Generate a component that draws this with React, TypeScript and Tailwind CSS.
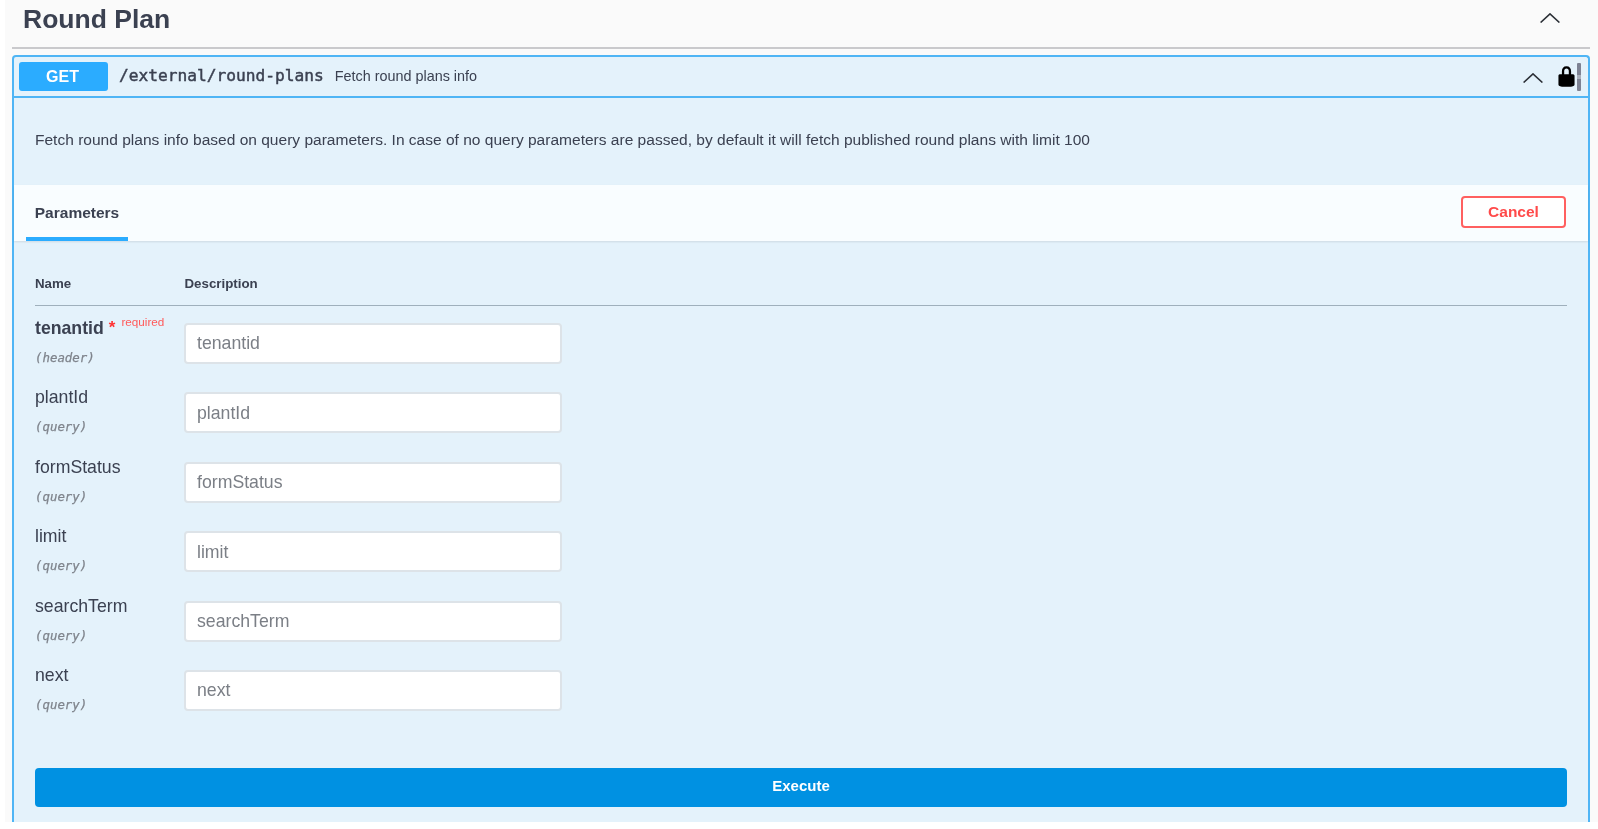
const sans = "font-['Liberation_Sans',Arial,sans-serif]";
const mono = "font-['DejaVu_Sans_Mono',monospace]";

const params = [
  { name: "tenantid", location: "(header)", required: true },
  { name: "plantId", location: "(query)" },
  { name: "formStatus", location: "(query)" },
  { name: "limit", location: "(query)" },
  { name: "searchTerm", location: "(query)" },
  { name: "next", location: "(query)" },
];

function Chevron({ className }: { className: string }) {
  return (
    <svg className={className} viewBox="0 0 20 10" fill="none" stroke="#2b2f36" strokeWidth="1.6">
      <polyline points="0.6,9.5 10,0.9 19.4,9.5" />
    </svg>
  );
}

function Lock() {
  return (
    <svg className="w-[23px] h-[23px] shrink-0" viewBox="0 0 20 20" fill="#000">
      <path d="M15.8 8H14V5.6C14 2.703 12.665 1 10 1 7.334 1 6 2.703 6 5.6V8H4c-.553 0-1 .646-1 1.199V17c0 .549.428 1.139.951 1.307l1.197.387C5.672 18.861 6.55 19 7.1 19h5.8c.549 0 1.428-.139 1.951-.307l1.196-.387c.524-.167.953-.757.953-1.306V9.199C17 8.646 16.352 8 15.8 8zM12 8H8V5.199C8 3.754 8.797 3 10 3c1.203 0 2 .754 2 2.199V8z" />
    </svg>
  );
}

function ParamRow({ name, location, required }: { name: string; location: string; required?: boolean }) {
  return (
    <div className="flex h-[69.45px]">
      <div className="w-[149px] shrink-0">
        <div className="flex items-start h-[24px] mt-[-7px]">
          <span className={`text-[17.7px] leading-[24px] text-[#3b4151] ${required ? "font-bold" : ""}`}>{name}</span>
          {required && (
            <>
              <span className="text-[17px] font-bold leading-[20px] text-[#ff3333] ml-[5px] mt-[2px]">*</span>
              <span className="text-[11.7px] leading-[14px] text-[#ff5a5a] ml-[6px] mt-[-1px]">required</span>
            </>
          )}
        </div>
        <div className={`${mono} italic text-[12.4px] leading-[16px] text-[#7f848c] [-webkit-text-stroke:0.25px_#7f848c] mt-[10px]`}>{location}</div>
      </div>
      <div className="w-[378px] h-[41px] bg-white rounded-[4px] border-2 border-[#dde3e8] flex items-center px-[11px] text-[17.7px] text-[#7b7f86]">
        {name}
      </div>
    </div>
  );
}

export default function App() {
  return (
    <div className={`${sans} w-[1598px] h-[829px] overflow-hidden bg-white blur-[0.4px]`}>
      <div className="ml-[5px] h-[822px] bg-[#fafafa] flex flex-col">
        <div className="ml-[7px] mr-[8px] h-[49px] shrink-0 border-b-2 border-[#c9c9cc] flex items-center justify-between pl-[11px] pr-[30px]">
          <span className="text-[26.5px] font-bold text-[#3b4151] mt-[-8px]">Round Plan</span>
          <Chevron className="w-[20px] h-[10px] mt-[-12px]" />
        </div>
        <div className="ml-[7px] mr-[8px] mt-[6px] flex-1 rounded-t-[4px] border-x-2 border-t-2 border-[#4fb5f5] bg-[#e4f2fb] flex flex-col min-h-0">
          <div className="h-[41px] shrink-0 border-b-2 border-[#4fb5f5] flex items-center pl-[5px]">
            <div className="w-[89px] h-[29px] rounded-[3px] bg-[#2bacff] text-white font-bold text-[16px] flex items-center justify-center">
              <span className="ml-[-2px]">GET</span>
            </div>
            <span className={`${mono} font-medium [-webkit-text-stroke:0.45px_#3b4151] text-[16.2px] text-[#3b4151] ml-[11px]`}>/external/round-plans</span>
            <span className="text-[14.4px] text-[#3b4151] ml-[11px]">Fetch round plans info</span>
            <Chevron className="w-[20px] h-[10px] ml-auto mt-[3px]" />
            <div className="ml-[12px] mr-[-1px]"><Lock /></div>
            <div className="w-[4px] h-[28px] bg-[#7d8293] rounded-[1px] mr-[7px] flex items-center">
              <div className="w-[4px] h-[4px] bg-[#a9afbb]" />
            </div>
          </div>

          <div className="h-[87px] shrink-0 flex items-center pl-[21px] pb-[3px] text-[15.54px] text-[#3b4151]">
            Fetch round plans info based on query parameters. In case of no query parameters are passed, by default it will fetch published round plans with limit 100
          </div>

          <div className="h-[56px] shrink-0 bg-[#f9fdff] shadow-[0_1px_2px_rgba(0,0,0,0.1)] flex items-center justify-between pl-[12px] pr-[22px]">
            <div className="w-[102px] h-[56px] pt-[3px] flex items-center justify-center border-b-4 border-[#2bacff] text-[15.5px] font-bold text-[#3b4151]">
              Parameters
            </div>
            <div className="w-[105px] h-[32px] mt-[-2px] rounded-[4px] border-2 border-[#ff6060] bg-white flex items-center justify-center text-[15.5px] font-bold text-[#ff4a4a]">
              Cancel
            </div>
          </div>

          <div className="px-[21px] flex-1 flex flex-col">
            <div className="h-[65px] shrink-0 border-b border-[#9fb0bc] flex text-[13.3px] font-bold text-[#3b4151] pt-[35px]">
              <span className="w-[149.5px] leading-[16px]">Name</span>
              <span className="leading-[16px]">Description</span>
            </div>
            <div className="pt-[17px]">
              {params.map((p) => (
                <ParamRow key={p.name} {...p} />
              ))}
            </div>
            <div className="mt-[28.6px] h-[39px] pb-[2px] rounded-[4px] bg-[#0091e2] text-white font-bold text-[15px] flex items-center justify-center">
              Execute
            </div>
          </div>
        </div>
      </div>
    </div>
  );
}
